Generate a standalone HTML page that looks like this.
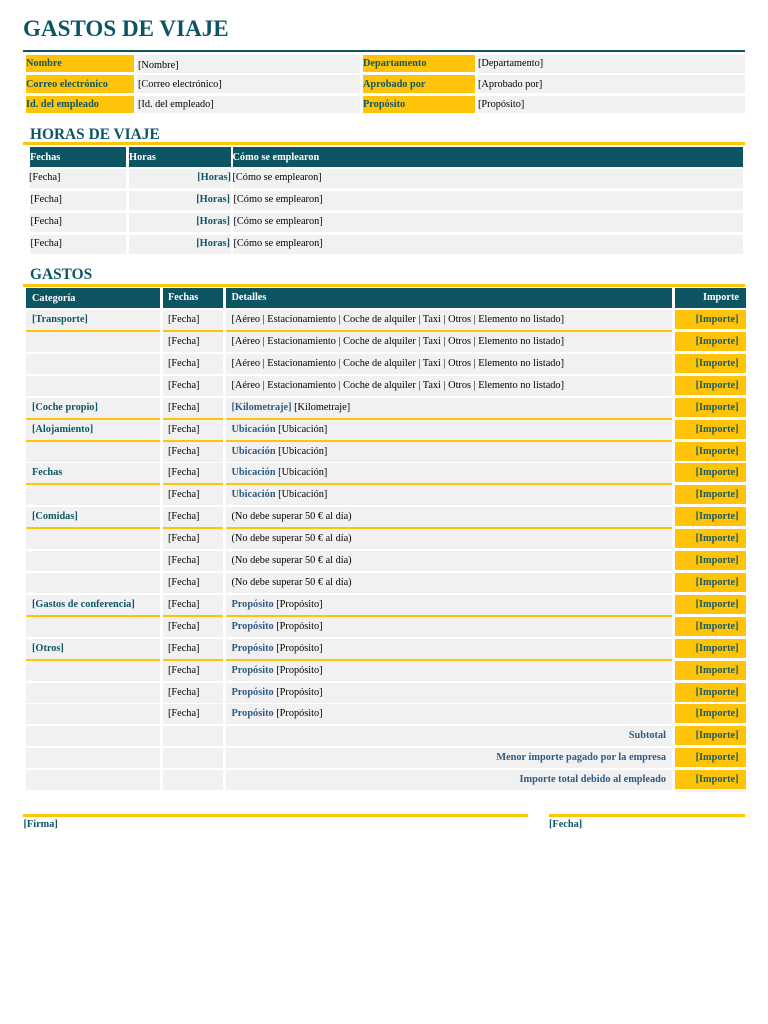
<!DOCTYPE html>
<html lang="es"><head><meta charset="utf-8"><title>Gastos de viaje</title>
<style>
html,body{margin:0;padding:0;background:#fff}
#p{position:relative;width:768px;height:1024px;overflow:hidden;font-family:"Liberation Serif",serif;font-size:10.3px;color:#000}
#p div{position:absolute;white-space:nowrap;box-sizing:border-box}
.g{background:#f1f1f1}.y{background:#ffc40a}.h{background:#0d5563;color:#fff;font-weight:bold}
.l{color:#0f5765;font-weight:bold}
b{color:#0f5765}i{font-style:normal;font-weight:bold;color:#2f5a82}
.t{line-height:18px;height:18px}
.r{left:0;width:768px;height:22px}
.c0,.c1,.c2,.c3{top:0;line-height:20px;height:20px}
.c0{left:26px;width:134px;padding-left:6px;background:#f1f1f1}
.c1{left:163px;width:60px;padding-left:5px;background:#f1f1f1}
.c2{left:226px;width:446px;padding-left:5.5px;background:#f1f1f1}
.c3{left:675px;width:71px;height:19px;padding-right:7.5px;background:#ffc40a;text-align:right;font-weight:bold;color:#1c5a62}
.u .c0,.u .c1,.u .c2{height:22px;border-bottom:2px solid #ffc40a}
.c0{color:#0f5765;font-weight:bold}
.tr{text-align:right;padding-right:6px!important}
</style></head><body><div id="p">

<div class="t" style="left:23px;top:15px;height:28px;line-height:28px;font-size:23px;font-weight:bold;color:#0d5563;letter-spacing:.05px">GASTOS DE VIAJE</div>
<div style="left:23px;top:50px;width:722px;height:2px;background:#0d5563"></div>

<div class="y l" style="left:26px;top:55px;width:108px;height:17px;line-height:15px;padding-top:1px">Nombre</div>
<div class="g" style="left:137px;top:55px;width:223px;height:18px;line-height:19px;padding-top:1px;padding-left:1px">[Nombre]</div>
<div class="y l" style="left:363px;top:55px;width:112px;height:17px;line-height:15px;padding-top:1px">Departamento</div>
<div class="g" style="left:478px;top:55px;width:267px;height:18px;line-height:15px;padding-top:1px">[Departamento]</div>

<div class="y l" style="left:26px;top:75px;width:108px;height:18px;line-height:18px;padding-top:1px">Correo electrónico</div>
<div class="g" style="left:137px;top:75px;width:223px;height:18px;line-height:18px;padding-top:1px;padding-left:1px">[Correo electrónico]</div>
<div class="y l" style="left:363px;top:75px;width:112px;height:18px;line-height:18px;padding-top:1px">Aprobado por</div>
<div class="g" style="left:478px;top:75px;width:267px;height:18px;line-height:18px;padding-top:1px">[Aprobado por]</div>

<div class="y l" style="left:26px;top:96px;width:108px;height:17px;line-height:15px;padding-top:1px">Id. del empleado</div>
<div class="g" style="left:137px;top:96px;width:223px;height:17px;line-height:15px;padding-top:1px;padding-left:1px">[Id. del empleado]</div>
<div class="y l" style="left:363px;top:96px;width:112px;height:17px;line-height:15px;padding-top:1px">Propósito</div>
<div class="g" style="left:478px;top:96px;width:267px;height:17px;line-height:15px;padding-top:1px">[Propósito]</div>

<div style="left:30px;top:125px;height:20px;line-height:20px;font-size:15.4px;font-weight:bold;color:#0d5563">HORAS DE VIAJE</div>
<div style="left:23px;top:142px;width:722px;height:3px;background:#ffc40a"></div>

<div class="h" style="left:30px;top:147px;width:96px;height:20px;line-height:21px">Fechas</div>
<div class="h" style="left:129px;top:147px;width:102px;height:20px;line-height:21px">Horas</div>
<div class="h" style="left:233px;top:147px;width:510px;height:20px;line-height:21px;text-indent:-.5px">Cómo se emplearon</div>

<div class="g" style="left:30px;top:169px;width:96px;height:19px;line-height:17px;text-indent:-1px">[Fecha]</div>
<div class="g" style="left:129px;top:169px;width:102px;height:19px;line-height:17px;text-align:right"><b>[Horas]</b></div>
<div class="g" style="left:233px;top:169px;width:510px;height:19px;line-height:17px;text-indent:-.5px">[Cómo se emplearon]</div>
<div class="g" style="left:30px;top:191px;width:96px;height:19px;line-height:17px;padding-left:.5px">[Fecha]</div>
<div class="g" style="left:129px;top:191px;width:102px;height:19px;line-height:17px;text-align:right;padding-right:1px"><b>[Horas]</b></div>
<div class="g" style="left:233px;top:191px;width:510px;height:19px;line-height:17px;padding-left:.5px">[Cómo se emplearon]</div>
<div class="g" style="left:30px;top:213px;width:96px;height:19px;line-height:17px;padding-left:.5px">[Fecha]</div>
<div class="g" style="left:129px;top:213px;width:102px;height:19px;line-height:17px;text-align:right;padding-right:1px"><b>[Horas]</b></div>
<div class="g" style="left:233px;top:213px;width:510px;height:19px;line-height:17px;padding-left:.5px">[Cómo se emplearon]</div>
<div class="g" style="left:30px;top:235px;width:96px;height:19px;line-height:17px;padding-left:.5px">[Fecha]</div>
<div class="g" style="left:129px;top:235px;width:102px;height:19px;line-height:17px;text-align:right;padding-right:1px"><b>[Horas]</b></div>
<div class="g" style="left:233px;top:235px;width:510px;height:19px;line-height:17px;padding-left:.5px">[Cómo se emplearon]</div>

<div style="left:30px;top:265px;height:20px;line-height:20px;font-size:15.4px;font-weight:bold;color:#0d5563">GASTOS</div>
<div style="left:23px;top:284px;width:722px;height:3px;background:#ffc40a"></div>

<div class="h" style="left:26px;top:288px;width:134px;height:20px;line-height:21px;padding-left:6px">Categoría</div>
<div class="h" style="left:163px;top:288px;width:60px;height:20px;line-height:20px;padding-left:5px">Fechas</div>
<div class="h" style="left:226px;top:288px;width:446px;height:20px;line-height:20px;padding-left:5.5px">Detalles</div>
<div class="h" style="left:675px;top:288px;width:71px;height:20px;line-height:20px;padding-right:7px;text-align:right">Importe</div>

<div class="r u" style="top:310px"><div class="c0">[Transporte]</div><div class="c1">[Fecha]</div><div class="c2">[Aéreo | Estacionamiento | Coche de alquiler | Taxi | Otros | Elemento no listado]</div><div class="c3">[Importe]</div></div>
<div class="r" style="top:332px"><div class="c0"></div><div class="c1">[Fecha]</div><div class="c2">[Aéreo | Estacionamiento | Coche de alquiler | Taxi | Otros | Elemento no listado]</div><div class="c3">[Importe]</div></div>
<div class="r" style="top:354px"><div class="c0"></div><div class="c1">[Fecha]</div><div class="c2">[Aéreo | Estacionamiento | Coche de alquiler | Taxi | Otros | Elemento no listado]</div><div class="c3">[Importe]</div></div>
<div class="r" style="top:376px"><div class="c0"></div><div class="c1">[Fecha]</div><div class="c2">[Aéreo | Estacionamiento | Coche de alquiler | Taxi | Otros | Elemento no listado]</div><div class="c3">[Importe]</div></div>
<div class="r u" style="top:398px"><div class="c0">[Coche propio]</div><div class="c1">[Fecha]</div><div class="c2"><i>[Kilometraje]</i> [Kilometraje]</div><div class="c3">[Importe]</div></div>
<div class="r u" style="top:420px"><div class="c0">[Alojamiento]</div><div class="c1">[Fecha]</div><div class="c2"><i>Ubicación</i> [Ubicación]</div><div class="c3">[Importe]</div></div>
<div class="r" style="top:442px"><div class="c0"></div><div class="c1">[Fecha]</div><div class="c2"><i>Ubicación</i> [Ubicación]</div><div class="c3">[Importe]</div></div>
<div class="r u" style="top:463px"><div class="c0">Fechas</div><div class="c1">[Fecha]</div><div class="c2"><i>Ubicación</i> [Ubicación]</div><div class="c3">[Importe]</div></div>
<div class="r" style="top:485px"><div class="c0"></div><div class="c1">[Fecha]</div><div class="c2"><i>Ubicación</i> [Ubicación]</div><div class="c3">[Importe]</div></div>
<div class="r u" style="top:507px"><div class="c0">[Comidas]</div><div class="c1">[Fecha]</div><div class="c2">(No debe superar 50 € al día)</div><div class="c3">[Importe]</div></div>
<div class="r" style="top:529px"><div class="c0"></div><div class="c1">[Fecha]</div><div class="c2">(No debe superar 50 € al día)</div><div class="c3">[Importe]</div></div>
<div class="r" style="top:551px"><div class="c0"></div><div class="c1">[Fecha]</div><div class="c2">(No debe superar 50 € al día)</div><div class="c3">[Importe]</div></div>
<div class="r" style="top:573px"><div class="c0"></div><div class="c1">[Fecha]</div><div class="c2">(No debe superar 50 € al día)</div><div class="c3">[Importe]</div></div>
<div class="r u" style="top:595px"><div class="c0">[Gastos de conferencia]</div><div class="c1">[Fecha]</div><div class="c2"><i>Propósito</i> [Propósito]</div><div class="c3">[Importe]</div></div>
<div class="r" style="top:617px"><div class="c0"></div><div class="c1">[Fecha]</div><div class="c2"><i>Propósito</i> [Propósito]</div><div class="c3">[Importe]</div></div>
<div class="r u" style="top:639px"><div class="c0">[Otros]</div><div class="c1">[Fecha]</div><div class="c2"><i>Propósito</i> [Propósito]</div><div class="c3">[Importe]</div></div>
<div class="r" style="top:661px"><div class="c0"></div><div class="c1">[Fecha]</div><div class="c2"><i>Propósito</i> [Propósito]</div><div class="c3">[Importe]</div></div>
<div class="r" style="top:683px"><div class="c0"></div><div class="c1">[Fecha]</div><div class="c2"><i>Propósito</i> [Propósito]</div><div class="c3">[Importe]</div></div>
<div class="r" style="top:704px"><div class="c0"></div><div class="c1">[Fecha]</div><div class="c2"><i>Propósito</i> [Propósito]</div><div class="c3">[Importe]</div></div>
<div class="r" style="top:726px"><div class="c0"></div><div class="c1"></div><div class="c2 tr"><i>Subtotal</i></div><div class="c3">[Importe]</div></div>
<div class="r" style="top:748px"><div class="c0"></div><div class="c1"></div><div class="c2 tr"><i>Menor importe pagado por la empresa</i></div><div class="c3">[Importe]</div></div>
<div class="r" style="top:770px"><div class="c0"></div><div class="c1"></div><div class="c2 tr"><i>Importe total debido al empleado</i></div><div class="c3">[Importe]</div></div>
<div class="g" style="left:675px;top:789px;width:71px;height:3px"></div>

<div style="left:23px;top:814px;width:505px;height:3px;background:#ffc40a"></div>
<div style="left:549px;top:814px;width:196px;height:3px;background:#ffc40a"></div>
<div class="l" style="left:23.5px;top:818px;line-height:14px">[Firma]</div>
<div class="l" style="left:549px;top:818px;line-height:14px">[Fecha]</div>
</div></body></html>
